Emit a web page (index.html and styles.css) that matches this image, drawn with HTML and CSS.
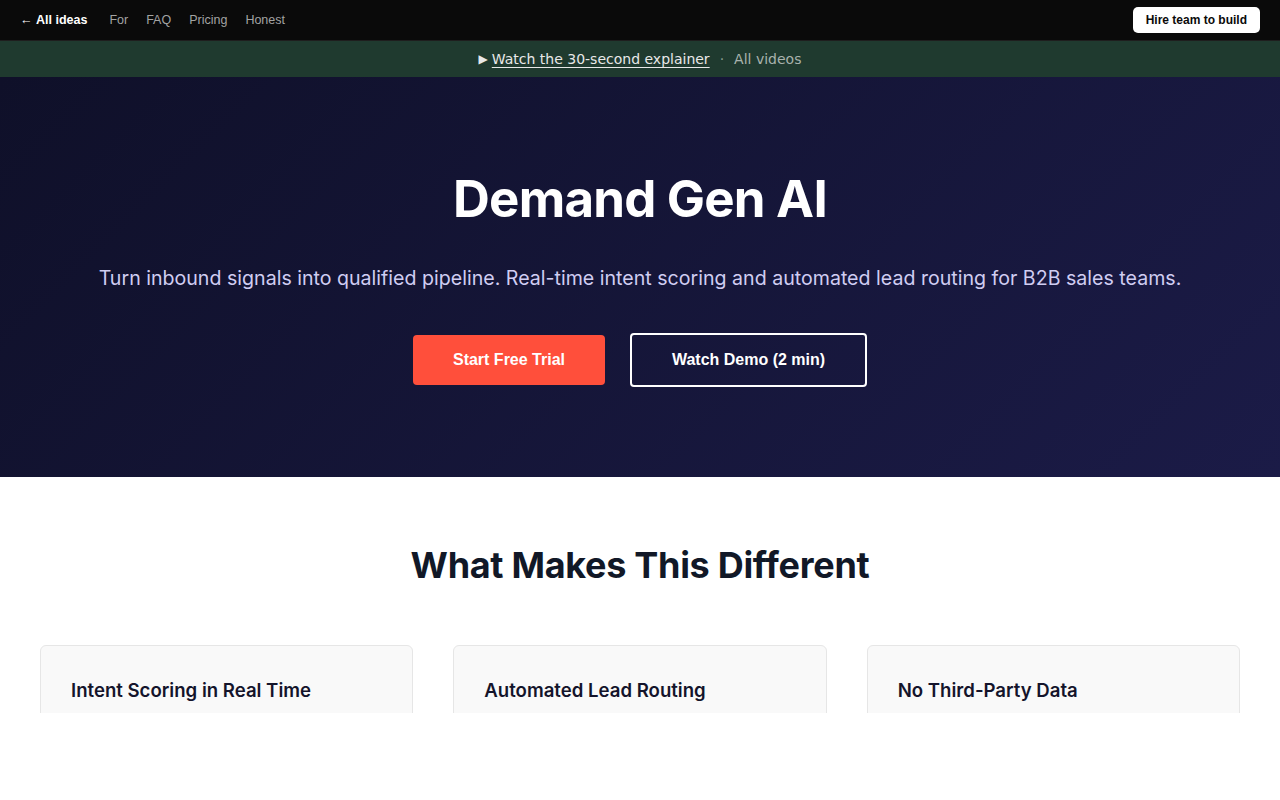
FILE: index.html
```html
<!doctype html>
<html lang="en">
  <head>
    <meta charset="UTF-8" />
    <meta name="viewport" content="width=device-width, initial-scale=1.0" />
    <title>Demand Gen AI</title>
    <link rel="stylesheet" href="styles.css">
  </head>
  <body>
    <div class="page">
      <!-- Top nav -->
      <nav class="topnav">
        <div class="nav-links">
          <a class="back" href="#">← <strong>All ideas</strong></a>
          <a href="#">For</a>
          <a href="#">FAQ</a>
          <a href="#">Pricing</a>
          <a href="#">Honest</a>
        </div>
        <a class="hire" href="#">Hire team to build</a>
      </nav>

      <!-- Video banner -->
      <div class="video-bar">
        <span class="play">▶</span>
        <a class="explainer" href="#">Watch the 30-second explainer</a>
        <span class="dot">·</span>
        <a class="all-videos" href="#">All videos</a>
      </div>

      <!-- Hero -->
      <header class="hero">
        <h1>Demand Gen AI</h1>
        <p class="lead">
          Turn inbound signals into qualified pipeline. Real-time intent scoring and automated lead routing for B2B sales teams.
        </p>
        <div class="cta-row">
          <a class="btn btn-primary" href="#">Start Free Trial</a>
          <a class="btn btn-outline" href="#">Watch Demo (2 min)</a>
        </div>
      </header>

      <!-- Differentiators -->
      <section class="features">
        <h2>What Makes This Different</h2>
        <div class="feature-grid">
          <div class="feature-card">
            <h3>Intent Scoring in Real Time</h3>
          </div>
          <div class="feature-card">
            <h3>Automated Lead Routing</h3>
          </div>
          <div class="feature-card">
            <h3>No Third-Party Data</h3>
          </div>
        </div>
      </section>
    </div>
  </body>
</html>
```

FILE: styles.css
```css
body {
  margin: 0;
  background: #fff;
  font-family: 'Liberation Sans', Arial, sans-serif;
}

a {
  text-decoration: none;
  color: inherit;
}

/* the capture stops mid-card */
.page {
  height: 713px;
  overflow: hidden;
}

.topnav {
  height: 40px;
  background: #0a0a0a;
  border-bottom: 1px solid #1e1e1e;
  display: flex;
  align-items: center;
  justify-content: space-between;
  padding: 0 20px;
  font-size: 12.5px;
}

.nav-links {
  display: flex;
  align-items: center;
  gap: 18px;
}

.nav-links a {
  color: #a3a3a3;
}

.nav-links .back {
  color: #fff;
  margin-right: 4px;
}

.hire {
  background: #fff;
  color: #0a0a0a;
  font-weight: bold;
  font-size: 12px;
  padding: 6px 13px;
  border-radius: 5px;
}

.video-bar {
  height: 36px;
  background: #1f3a2f;
  display: flex;
  align-items: center;
  justify-content: center;
  gap: 6px;
  font-family: 'DejaVu Sans', sans-serif;
  font-size: 14px;
  color: #e8e8e8;
}

.play {
  font-size: 12px;
  margin-right: -2px;
}

.explainer {
  text-decoration: underline;
  text-underline-offset: 3px;
}

.dot {
  color: #8a9a92;
  margin: 0 4px;
}

.all-videos {
  color: #a8b2ad;
}

.hero {
  background: linear-gradient(135deg, #0f1029 0%, #1b1b47 100%);
  padding: 89px 40px 90px;
  text-align: center;
  color: #fff;
}

.hero h1 {
  margin: 0;
  font-family: Inter, 'DejaVu Sans', sans-serif;
  font-size: 51px;
  font-weight: 700;
  letter-spacing: -0.8px;
  line-height: 66px;
}

.lead {
  margin: 30px 0 0;
  font-family: Inter, sans-serif;
  font-size: 19.6px;
  line-height: 32px;
  color: #d0cdf2;
}

.cta-row {
  margin-top: 39px;
  display: flex;
  justify-content: center;
  align-items: center;
  gap: 25px;
}

.btn {
  display: inline-flex;
  align-items: center;
  justify-content: center;
  font-weight: bold;
  font-size: 16px;
  border-radius: 4px;
  box-sizing: border-box;
}

.btn-primary {
  background: #ff4f3b;
  width: 192px;
  height: 50px;
}

.btn-outline {
  border: 2px solid #fff;
  width: 237px;
  height: 54px;
}

.features {
  padding: 64px 40px 0;
}

.features h2 {
  margin: 0;
  text-align: center;
  font-family: Inter, sans-serif;
  font-size: 36px;
  font-weight: 700;
  letter-spacing: -0.3px;
  line-height: 48px;
  color: #111827;
}

.feature-grid {
  margin-top: 56px;
  display: grid;
  grid-template-columns: repeat(3, 1fr);
  gap: 40px;
}

.feature-card {
  background: #f9f9f9;
  border: 1px solid #e6e6e6;
  border-radius: 6px;
  padding: 30px 30px 40px;
  height: 200px;
}

.feature-card h3 {
  margin: 0;
  font-family: Inter, sans-serif;
  font-size: 18.6px;
  font-weight: 600;
  line-height: 28px;
  color: #14142b;
}
```
